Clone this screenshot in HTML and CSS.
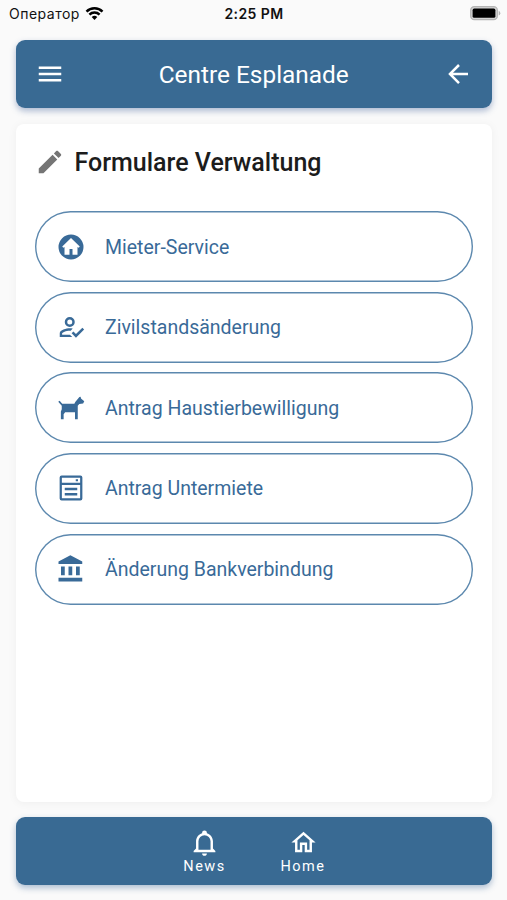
FILE: index.html
```html
<!DOCTYPE html>
<html lang="de">
<head>
    <meta charset="UTF-8">
    <meta name="viewport" content="width=device-width, initial-scale=1.0">
    <title>Centre Esplanade</title>
    <link rel="stylesheet" href="styles.css">
</head>
<body>
    <div class="status-bar">
        <div class="carrier">
            <span>Оператор</span>
            <svg class="wifi" viewBox="0 0 18 14">
                <path d="M9 14L6.2 11.1A4 4 0 0 1 11.8 11.1Z" fill="#000"/>
                <path d="M3.9 8.6A7.2 7.2 0 0 1 14.1 8.6M1 5.6A11.3 11.3 0 0 1 17 5.6" fill="none" stroke="#000" stroke-width="2.5"/>
            </svg>
        </div>
        <div class="time">2:25 PM</div>
        <div class="battery-wrap">
            <svg class="battery" viewBox="0 0 31 15">
                <rect x="0.7" y="0.7" width="26.6" height="13" rx="3.6" fill="#d5d5d5" stroke="#b5b5b5" stroke-width="1.3"/>
                <rect x="2.6" y="2.6" width="22.8" height="9.2" rx="1.6" fill="#000"/>
                <path d="M28.7 4.8A2.6 2.6 0 0 1 28.7 9.6Z" fill="#b5b5b5"/>
            </svg>
        </div>
    </div>

    <header class="app-bar">
        <svg class="icon" viewBox="0 0 24 24"><path d="M3 6H21V8H3V6M3 11H21V13H3V11M3 16H21V18H3V16Z"/></svg>
        <h1 class="app-title">Centre Esplanade</h1>
        <svg class="icon" viewBox="0 0 24 24"><path d="M20 11V13H8L13.5 18.5L12.08 19.92L4.16 12L12.08 4.08L13.5 5.5L8 11H20Z"/></svg>
    </header>

    <main class="card">
        <div class="card-title">
            <svg class="icon" viewBox="0 0 24 24"><path d="M20.71 7.04C21.1 6.65 21.1 6 20.71 5.63L18.37 3.29C18 2.9 17.35 2.9 16.96 3.29L15.12 5.12L18.87 8.87M3 17.25V21H6.75L17.81 9.93L14.06 6.18L3 17.25Z"/></svg>
            <h2>Formulare Verwaltung</h2>
        </div>

        <div class="form-list">
            <a class="form-item">
                <svg class="icon" viewBox="0 0 24 24"><path fill-rule="evenodd" d="M12 2A10 10 0 1 1 12 22A10 10 0 1 1 12 2ZM12 4.8L5 11.6L5.8 12.5L6.8 11.9V18.2H10.8V13.5H13.2V18.2H17.2V11.9L18.2 12.5L19 11.6Z"/></svg>
                <span>Mieter-Service</span>
            </a>
            <a class="form-item">
                <svg class="icon" viewBox="0 0 24 24"><path d="M21.1 12.5L22.5 13.91L15.97 20.5L12.5 17L13.9 15.59L15.97 17.67L21.1 12.5M11 4A4 4 0 0 1 15 8A4 4 0 0 1 11 12A4 4 0 0 1 7 8A4 4 0 0 1 11 4M11 6A2 2 0 0 0 9 8A2 2 0 0 0 11 10A2 2 0 0 0 13 8A2 2 0 0 0 11 6M11 13C11.68 13 12.5 13.09 13.41 13.26L11.74 14.93L11 14.9C8.03 14.9 4.9 16.36 4.9 17V18.1H11.1L13 20H3V17C3 14.34 8.33 13 11 13"/></svg>
                <span>Zivilstandsänderung</span>
            </a>
            <a class="form-item">
                <svg class="icon" viewBox="0 0 24 24"><path d="M15.4 7.2L18.7 3.2L19.7 3L20 4.3L22.6 6.6L21.7 8.4L18.6 8.7L17.4 10.2V21H15.2V15.3H7.3L6.1 17V21H3.9V14.7L4.6 13V10.2L1.8 6.9L2.9 6.2L5 8.5H14.7Z"/></svg>
                <span>Antrag Haustierbewilligung</span>
            </a>
            <a class="form-item">
                <svg class="icon" viewBox="0 0 24 24"><path d="M4.5 2H19.5A1.6 1.6 0 0 1 21.1 3.6V20.4A1.6 1.6 0 0 1 19.5 22H4.5A1.6 1.6 0 0 1 2.9 20.4V3.6A1.6 1.6 0 0 1 4.5 2M4.7 3.8V7.8H19.3V3.8H4.7M4.7 9.6V20.2H19.3V9.6H4.7M15.8 5H17.6V6.6H15.8V5M7 11.8H17V13.7H7V11.8M7 16H17V17.9H7V16Z" fill-rule="evenodd"/></svg>
                <span>Antrag Untermiete</span>
            </a>
            <a class="form-item">
                <svg class="icon" viewBox="0 0 24 24"><path d="M11.5 1L2 6V8H21V6M16 10V17H19V10M2 22H21V19H2M10 10V17H13V10M4 10V17H7V10H4Z"/></svg>
                <span>Änderung Bankverbindung</span>
            </a>
        </div>
    </main>

    <nav class="bottom-nav">
        <a class="nav-item">
            <svg class="icon" viewBox="0 0 24 24"><path d="M10 21H14C14 22.1 13.1 23 12 23S10 22.1 10 21M21 19V20H3V19L5 17V11C5 7.9 7.03 5.17 10 4.29V4A2 2 0 0 1 14 4V4.29C16.97 5.17 19 7.9 19 11V17L21 19M17 11A5 5 0 0 0 7 11V18H17V11Z"/></svg>
            <span>News</span>
        </a>
        <a class="nav-item">
            <svg class="icon" viewBox="0 0 24 24"><path d="M12 5.69L17 10.19V18H15V12H9V18H7V10.19L12 5.69M12 3L2 12H5V20H11V14H13V20H19V12H22"/></svg>
            <span>Home</span>
        </a>
    </nav>
</body>
</html>
```

FILE: styles.css
```css
* {
    box-sizing: border-box;
}
body {
    display: flex;
    flex-direction: column;
    height: 900px;
    margin: 0;
    padding: 0 15px 15px 15.5px;
    background-color: #fafafa;
    font-family: Roboto, sans-serif;
}
h1, h2 {
    margin: 0;
}
.icon {
    display: block;
    flex: none;
    width: 30px;
    height: 30px;
    fill: currentColor;
}

/* Status bar */
.status-bar {
    display: grid;
    grid-template-columns: 1fr auto 1fr;
    align-items: center;
    height: 26px;
    margin: 0 -8px 14px -6.5px;
    font-family: Inter, sans-serif;
    font-size: 14px;
    color: #111;
}
.carrier {
    display: flex;
    align-items: center;
    gap: 5px;
    letter-spacing: 0.5px;
}
.wifi {
    width: 19px;
    height: 14px;
}
.time {
    margin-left: -1px;
    font-weight: 600;
    letter-spacing: 0.4px;
}
.battery-wrap {
    display: flex;
    justify-content: flex-end;
}
.battery {
    width: 31px;
    height: 15px;
    margin-right: -1px;
}

/* Header */
.app-bar {
    display: flex;
    align-items: center;
    justify-content: space-between;
    height: 68px;
    padding: 0 19px;
    border-radius: 9px;
    background-color: #396a93;
    color: #fff;
    box-shadow: 0 3px 6px rgba(57, 90, 150, 0.4);
}
.app-title {
    font-size: 24.4px;
    font-weight: 400;
}

/* Content */
.card {
    flex: 1;
    margin: 16px 0 15px;
    padding: 23px 19.5px;
    border-radius: 8px;
    background-color: #fff;
    box-shadow: 0 1px 10px rgba(0, 0, 0, 0.05);
}
.card-title {
    display: flex;
    align-items: center;
    gap: 9.5px;
    height: 30px;
    color: #757575;
}
.card-title h2 {
    font-size: 25px;
    font-weight: 500;
    color: #1c1c1c;
}
.form-list {
    display: flex;
    flex-direction: column;
    gap: 9.65px;
    margin-top: 34px;
}
.form-item {
    display: flex;
    align-items: center;
    gap: 19.5px;
    height: 71px;
    padding-left: 20.5px;
    border-radius: 36px;
    box-shadow: inset 0 0 0 1.4px #5c88ae;
    font-size: 19.5px;
    color: #396a98;
}
.form-item span {
    padding-top: 1px;
}

/* Bottom navigation */
.bottom-nav {
    display: flex;
    justify-content: center;
    height: 68px;
    padding-top: 11px;
    border-radius: 9px;
    background-color: #396a93;
    color: #fff;
    box-shadow: 0 3px 6px rgba(57, 100, 150, 0.4);
}
.nav-item {
    display: flex;
    flex-direction: column;
    align-items: center;
    gap: 1px;
    width: 98.5px;
    font-size: 14.5px;
    line-height: 18px;
    letter-spacing: 1.5px;
}
.nav-item .icon {
    width: 29px;
    height: 29px;
}
```
